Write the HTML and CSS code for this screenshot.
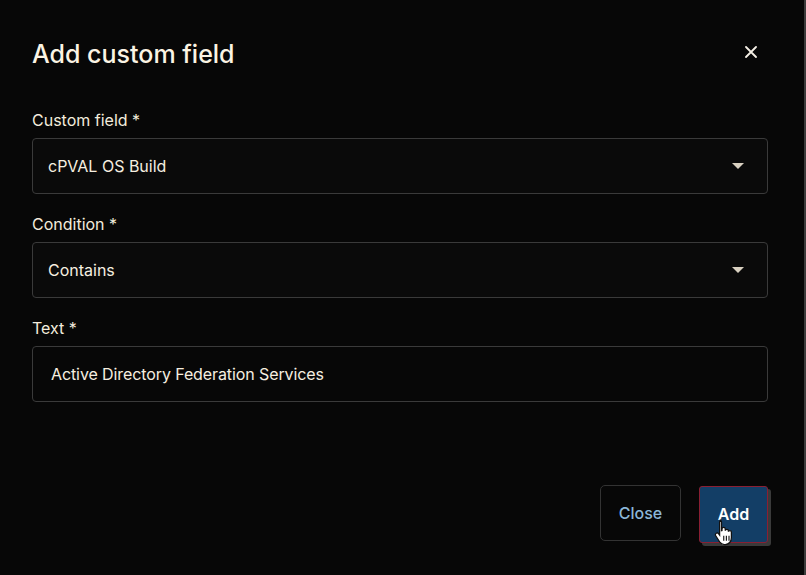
FILE: index.html
```html
<!DOCTYPE html>
<html lang="en">
<head>
<meta charset="utf-8">
<title>Add custom field</title>
<link rel="stylesheet" href="styles.css">
</head>
<body>
<div class="modal">
  <div class="header">
    <h1 class="title">Add custom field</h1>
    <button class="close-x" aria-label="Close">
      <svg width="12" height="12" viewBox="0 0 12 12"><path d="M1 1L11 11M11 1L1 11" stroke="#f5f0e6" stroke-width="1.8" stroke-linecap="round"/></svg>
    </button>
  </div>
  <div class="body">
    <div class="field">
      <label class="label">Custom field *</label>
      <div class="control select">
        <span class="value">cPVAL OS Build</span>
        <span class="caret"></span>
      </div>
    </div>
    <div class="field">
      <label class="label">Condition *</label>
      <div class="control select">
        <span class="value">Contains</span>
        <span class="caret"></span>
      </div>
    </div>
    <div class="field">
      <label class="label">Text *</label>
      <div class="control input">
        <span class="value">Active Directory Federation Services</span>
      </div>
    </div>
  </div>
  <div class="footer">
    <button class="btn btn-close">Close</button>
    <button class="btn btn-add">Add
      <svg class="cursor" width="20" height="28" viewBox="0 0 16 22">
        <path d="M4.5 1.5c.9 0 1.5.6 1.5 1.5v7l.4-.1V8.6c0-.8.6-1.3 1.3-1.3s1.3.5 1.3 1.3v1.3c.1-.7.6-1.1 1.3-1.1.7 0 1.2.5 1.2 1.2v.8c.1-.6.6-1 1.2-1 .7 0 1.2.5 1.2 1.2v4.6c0 2.9-1.9 5.4-4.9 5.4H8.3c-1.7 0-2.9-.8-3.8-2.1L1.4 14c-.5-.7-.3-1.6.4-2 .6-.4 1.4-.2 1.8.3l.9 1.2V3c0-.9.6-1.5 1.5-1.5z" fill="#ffffff" stroke="#111" stroke-width="1"/>
        <path d="M7.8 14v4M9.9 14v4M12 14v4" stroke="#111" stroke-width=".9"/>
      </svg>
    </button>
  </div>
</div>
</body>
</html>
```

FILE: styles.css
```css
* { box-sizing: border-box; }

html, body {
  margin: 0;
  padding: 0;
  background: #070707;
}

body {
  width: 806px;
  height: 575px;
  overflow: hidden;
  font-family: "Inter", "Liberation Sans", sans-serif;
  color: #f6efe0;
}

.modal {
  width: 806px;
  height: 575px;
  border-right: 2px solid #3c3c3c;
  padding: 38px 36px 0 32px;
  display: flex;
  flex-direction: column;
}

.header {
  display: flex;
  align-items: center;
  justify-content: space-between;
  height: 32px;
}

.title {
  margin: 0;
  font-size: 25px;
  line-height: 32px;
  font-weight: 500;
  color: #fbf4e4;
}

.close-x {
  background: none;
  border: none;
  padding: 0;
  width: 24px;
  height: 24px;
  margin-right: 5px;
  margin-top: -4px;
  display: flex;
  align-items: center;
  justify-content: center;
  cursor: pointer;
}

.body {
  margin-top: 38px;
  display: flex;
  flex-direction: column;
  gap: 18px;
}

.field {
  display: flex;
  flex-direction: column;
  gap: 6px;
}

.label {
  font-size: 16px;
  line-height: 24px;
  color: #f3ecdd;
}

.control {
  height: 56px;
  border: 1px solid #3a3a3a;
  border-radius: 4px;
  background: #0a0a0a;
  display: flex;
  align-items: center;
  justify-content: space-between;
  font-size: 16px;
  color: #f6efe0;
}

.select {
  padding: 0 23px 0 15px;
}

.input {
  padding: 0 18px;
  background: #070707;
  letter-spacing: -0.1px;
}

.caret {
  width: 0;
  height: 0;
  border-left: 6px solid transparent;
  border-right: 6px solid transparent;
  border-top: 6px solid #d9d1c1;
}

.footer {
  margin-top: auto;
  margin-bottom: 32px;
  display: flex;
  justify-content: flex-end;
  gap: 18px;
}

.btn {
  font-family: "Inter", "Liberation Sans", sans-serif;
  font-size: 16px;
  height: 56px;
  border-radius: 5px;
  cursor: pointer;
  position: relative;
}

.btn-close {
  width: 81px;
  background: #070707;
  border: 1px solid #333333;
  color: #8cb7d8;
  font-weight: 500;
}

.btn-add {
  width: 69px;
  height: 57px;
  margin-top: 1px;
  background: #133e66;
  border: 1px solid #8a1f33;
  border-radius: 3px;
  color: #ffffff;
  font-weight: 600;
  padding-bottom: 3px;
  box-shadow: 3px 3px 0 #3a3a3a;
}

.cursor {
  position: absolute;
  left: 14px;
  top: 31px;
}
```
